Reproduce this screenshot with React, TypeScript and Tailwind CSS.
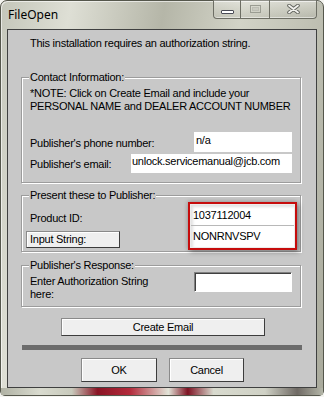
import React from "react";

const ui = "font-['Liberation_Sans',Arial,sans-serif] text-[11px] leading-[13px] tracking-[-0.25px] text-black";

// etched group box with its caption sitting on the top line
const Group = ({ title, className, children }: { title: string; className: string; children: React.ReactNode }) => (
  <div
    className={`relative ml-[13px] w-[280px] border border-[#9c9c9c] shadow-[inset_1px_1px_0_#fff,1px_1px_0_#fff] ${className}`}
  >
    <span className="absolute left-[7px] top-[-7px] bg-[#c8c8c8] px-[1px]">{title}</span>
    {children}
  </div>
);

const Sunken = ({ className }: { className: string }) => (
  <div className={`border border-t-[#808080] border-l-[#808080] border-b-white border-r-white bg-white shadow-[inset_1px_1px_0_#404040] ${className}`} />
);

const PushButton = ({ label, className }: { label: string; className: string }) => (
  <button
    className={`flex items-center justify-center border border-[#8a8a8a] border-b-[#3c3c3c] border-r-[#3c3c3c] bg-[#efefef] shadow-[inset_1px_1px_0_#fff] ${className}`}
  >
    {label}
  </button>
);

export default function App() {
  return (
    <div className="h-[397px] w-[324px] overflow-hidden bg-[#f4f4f0]">
      <div className="flex h-[396px] w-full flex-col rounded-t-[7px] rounded-b-[5px] border border-[#55574c] bg-[linear-gradient(100deg,#c4c6ba_0%,#dedfd5_18%,#b5b6a8_42%,#d2d3c7_62%,#c0c1b4_80%,#a9aa9c_100%)] px-[6px] shadow-[inset_1px_1px_0_rgba(255,255,255,0.6)]">
        {/* title bar */}
        <div className="flex h-[28px] shrink-0 items-start justify-between">
          <span className="mt-[6px] pl-[1px] font-['Noto_Sans',sans-serif] text-[12px] leading-[16px] text-black">
            FileOpen
          </span>
          <div className="mt-[-1px] flex h-[19px] overflow-hidden rounded-b-[4px] border border-t-0 border-[#6d6e64] bg-[linear-gradient(180deg,rgba(255,255,255,0.35),rgba(255,255,255,0.1)_50%,rgba(0,0,0,0.04))] shadow-[inset_0_-1px_0_rgba(255,255,255,0.5)]">
            <div className="flex w-[27px] items-center justify-center border-r border-[#6d6e64] pt-[5px]">
              <div className="h-[4px] w-[13px] rounded-[1px] border border-[#4a4c56] bg-white" />
            </div>
            <div className="flex w-[29px] items-center justify-center border-r border-[#6d6e64]">
              <div className="flex h-[8px] w-[11px] items-center justify-center border border-[#9a9c92]">
                <div className="h-[4px] w-[7px] border border-[#bcbdb4] bg-[#c9cac0]" />
              </div>
            </div>
            <div className="flex w-[46px] items-center justify-center">
              <svg width="13" height="10" viewBox="0 0 13 10">
                <path d="M2 1.5 L11 8.5 M11 1.5 L2 8.5" stroke="#62645e" strokeWidth="3.6" strokeLinecap="round" />
                <path d="M2 1.5 L11 8.5 M11 1.5 L2 8.5" stroke="#f2f2ee" strokeWidth="1.8" strokeLinecap="round" />
              </svg>
            </div>
          </div>
        </div>

        {/* client area */}
        <div className={`flex flex-1 flex-col border border-[#3f4040] bg-[#c8c8c8] ${ui}`}>
          <p className="ml-[22px] mt-[7px]">This installation requires an authorization string.</p>

          <Group title="Contact Information:" className="mt-[27px] h-[106px] pl-[8px] pr-[8px] pt-[9px]">
            <p>*NOTE: Click on Create Email and include your</p>
            <p>PERSONAL NAME and DEALER ACCOUNT NUMBER</p>
            <div className="mt-[19px] flex items-center justify-between">
              <span className="mt-[2px]">Publisher's phone number:</span>
              <div className="h-[20px] w-[98px] bg-white pl-[2px] pt-[2px]">n/a</div>
            </div>
            <div className="mt-[2px] flex items-center justify-between">
              <span className="mt-[1px]">Publisher's email:</span>
              <div className="h-[19px] w-[161px] bg-white pl-[1px] pt-[1px]">unlock.servicemanual@jcb.com</div>
            </div>
          </Group>

          <Group title="Present these to Publisher:" className="mt-[12px] flex h-[57px] pl-[4px] pr-[3px]">
            <div className="flex flex-col">
              <span className="ml-[4px] mt-[16px]">Product ID:</span>
              <PushButton label="Input String:" className="mt-[6px] h-[17px] w-[94px] justify-start pl-[3px]" />
            </div>
            <div className="ml-auto mt-[6px] flex h-[48px] w-[109px] flex-col border-2 border-[#c60c0c] bg-[#ececec] px-[1px] py-[1px] shadow-[2px_2px_5px_rgba(0,0,0,0.35),-1px_-1px_4px_rgba(0,0,0,0.15)]">
              <div className="flex flex-1 flex-col bg-white shadow-[inset_2px_2px_3px_rgba(0,0,0,0.12)]">
                <div className="h-[21px] border-b border-[#b8b8b8] pl-[2px] pt-[4px]">1037112004</div>
                <div className="flex-1 pl-[2px] pt-[4px]">NONRNVSPV</div>
              </div>
            </div>
          </Group>

          <Group title="Publisher's Response:" className="mt-[13px] flex h-[42px] justify-between pl-[8px] pr-[8px]">
            <p className="mt-[9px]">
              Enter Authorization String
              <br />
              here:
            </p>
            <Sunken className="mt-[6px] h-[20px] w-[98px]" />
          </Group>

          <PushButton label="Create Email" className="ml-[53px] mt-[11px] h-[18px] w-[204px]" />

          <div className="ml-[14px] mt-[9px] h-[5px] w-[280px] bg-[#6c6c6c]" />

          <div className="mt-[8px] flex justify-center gap-[12px] pl-[1px]">
            <PushButton label="OK" className="h-[24px] w-[76px]" />
            <PushButton label="Cancel" className="h-[24px] w-[75px]" />
          </div>
        </div>

        {/* bottom frame strip */}
        <div className="mx-[-6px] h-[7px] shrink-0 bg-[linear-gradient(90deg,#b0b2a4_0%,#d9dbcf_12%,#c8cabc_22%,#8a1424_30%,#b32a3a_40%,#e2e4d8_52%,#7e1222_58%,#d8dace_66%,#cfd1c5_82%,#6f6a64_92%,#b4b6a8_100%)]" />
      </div>
    </div>
  );
}
